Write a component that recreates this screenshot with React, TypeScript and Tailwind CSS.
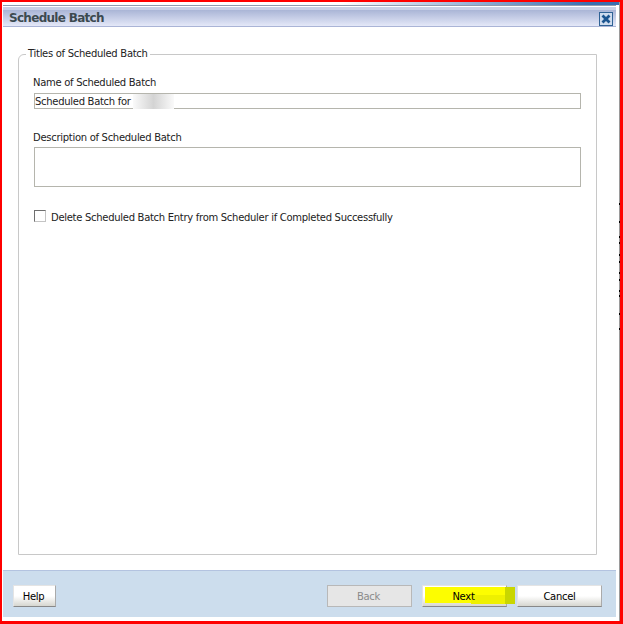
const ticks = [203, 221, 236, 242, 254, 261, 272, 279, 290, 295, 313, 328];

export default function App() {
  return (
    <div className="w-[623px] h-[624px] box-border border-t-2 border-l-[2px] border-r-[3px] border-b-[3px] border-[#ff0000] bg-white relative overflow-hidden font-['DejaVu_Sans',sans-serif] text-[10px] tracking-[-0.29px] text-[#222]">
      <div className="h-full flex flex-col pl-[1px] pr-[1px] border-r border-[#9a9a9a] box-border">
        <div className="h-[3px] -mx-[1px] bg-gradient-to-r from-white from-[55%] to-[#3a70b0] to-[95%]" />
        <div className="h-[1px] bg-[#8f9bb0] mr-[2px]" />
        <div className="h-[1px]" />
        <div className="h-[20px] mr-[2px] box-border border-t-[3px] border-t-[#c9d0e6] border-b border-b-[#aab4d6] bg-gradient-to-b from-[#aab5d6] to-[#e4e8f8] flex items-center justify-between pl-[6px] pr-[3px]">
          <span className="text-[12px] font-bold tracking-[-0.7px] text-[#3c4a50]">Schedule Batch</span>
          <svg width="14" height="14" viewBox="0 0 14 14" className="mt-[1px]">
            <rect x="0.5" y="0.5" width="13" height="13" fill="#cfdcee" stroke="#2f6295" />
            <path d="M3.5 3.5 L10.5 10.5 M10.5 3.5 L3.5 10.5" stroke="#1c5590" strokeWidth="2.8" />
          </svg>
        </div>
        <div className="flex-1 min-h-0 mr-[2px] pl-[15px] pr-[19px] pt-[20px] pb-[15px]">
          <fieldset className="h-full border border-[#c8c8c8] rounded-tl-[6px] m-0 pl-[14px] pr-[15px] pt-[16px] box-border">
            <legend className="px-[2px] -ml-[7px] leading-[14px]">Titles of Scheduled Batch</legend>
            <div className="leading-[12px]">Name of Scheduled Batch</div>
            <div className="mt-[4px] ml-[1px] h-[16px] border border-[#b5b5ad] flex items-center">
              <span className="whitespace-nowrap">Scheduled Batch for</span>
              <span className="ml-[2px] w-[41px] h-[15px] bg-gradient-to-r from-[#fafafa] via-[#d4d4d4] to-[#fafafa]" />
            </div>
            <div className="mt-[23px] leading-[12px]">Description of Scheduled Batch</div>
            <div className="mt-[3px] ml-[1px] h-[40px] border border-[#b5b5ad]" />
            <div className="mt-[23px] ml-[1px] flex items-start gap-[5px]">
              <span className="w-[12px] h-[12px] border border-[#6f6f6f] border-r-[#c4c4c4] border-b-[#c4c4c4] bg-white" />
              <span className="leading-[12px] mt-[2px]">Delete Scheduled Batch Entry from Scheduler if Completed Successfully</span>
            </div>
          </fieldset>
        </div>
        <div className="h-[47px] mr-[2px] bg-[#ccdded] border-t border-[#b3c3e0] flex items-start pt-[14px] pl-[10px] pr-[14px]">
          <button className="w-[43px] h-[22px] pr-[2px] border border-[#e4e4e4] border-b-[#888] border-r-[#aaa] bg-gradient-to-b from-white via-white to-[#d6d6d0] text-black">Help</button>
          <div className="flex-1" />
          <button className="w-[85px] h-[22px] pr-[2px] border border-[#b8b8b8] bg-[#e6e6e6] text-[#8a8a8a]">Back</button>
          <button className="relative ml-[10px] w-[85px] h-[22px] pr-[2px] border border-[#e4e4e4] border-b-[#888] border-r-[#aaa] bg-gradient-to-b from-white via-white to-[#d6d6d0] text-black">
            <span className="absolute left-[2px] top-[1px] w-[80px] h-[16px] bg-[#fdfd00]" />
            <span className="absolute left-[48px] top-[9px] w-[34px] h-[9px] bg-[#eef000]" />
            <span className="absolute left-[82px] top-[1px] w-[10px] h-[17px] bg-[#c9d600]" />
            <span className="relative">Next</span>
          </button>
          <button className="ml-[10px] w-[85px] h-[22px] border border-[#e4e4e4] border-b-[#888] border-r-[#aaa] bg-gradient-to-b from-white via-white to-[#d6d6d0] text-black">Cancel</button>
        </div>
        <div className="h-[4px]" />
      </div>
      {ticks.map((y) => (
        <span key={y} className="absolute right-0 w-[1px] h-[2px] bg-black" style={{ top: y - 2 }} />
      ))}
    </div>
  );
}
